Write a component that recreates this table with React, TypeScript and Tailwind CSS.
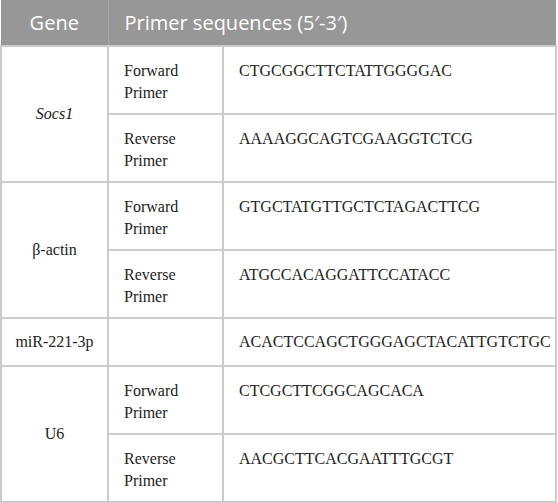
const rows = [
  { gene: 'Socs1', italic: true, primers: [
    { label: ['Forward', 'Primer'], seq: 'CTGCGGCTTCTATTGGGGAC' },
    { label: ['Reverse', 'Primer'], seq: 'AAAAGGCAGTCGAAGGTCTCG' }
  ] },
  { gene: 'β-actin', italic: false, primers: [
    { label: ['Forward', 'Primer'], seq: 'GTGCTATGTTGCTCTAGACTTCG' },
    { label: ['Reverse', 'Primer'], seq: 'ATGCCACAGGATTCCATACC' }
  ] },
  { gene: 'miR-221-3p', italic: false, primers: [
    { label: [], seq: 'ACACTCCAGCTGGGAGCTACATTGTCTGC' }
  ] },
  { gene: 'U6', italic: false, primers: [
    { label: ['Forward', 'Primer'], seq: 'CTCGCTTCGGCAGCACA' },
    { label: ['Reverse', 'Primer'], seq: 'AACGCTTCACGAATTTGCGT' }
  ] }
];

export default function App() {
  return (
    <div className="w-[558px] h-[503px] bg-white overflow-hidden">
      <table className="w-[557px] border-collapse table-fixed">
        <colgroup>
          <col className="w-[107px]" />
          <col className="w-[115px]" />
          <col />
        </colgroup>
        <thead>
          <tr className="h-[46px] bg-[#979797] text-white">
            <th className="font-[family-name:Open_Sans] text-[20px] font-normal text-center border-r border-[#a9a9a9]">Gene</th>
            <th colSpan={2} className="font-[family-name:Open_Sans] text-[20px] font-normal text-left pl-[16px]">
              Primer sequences (5′-3′)
            </th>
          </tr>
        </thead>
        <tbody>
          {rows.map((row) =>
            row.primers.map((primer, i) => (
              <tr key={row.gene + i} className={primer.label.length ? 'h-[68px]' : 'h-[48px]'}>
                {i === 0 && (
                  <td
                    rowSpan={row.primers.length}
                    className={
                      row.italic
                        ? 'font-[family-name:Liberation_Serif] italic text-[16px] text-[#222] border-2 border-[#cbcbcb] text-center align-middle'
                        : 'font-[family-name:Liberation_Serif] text-[16px] text-[#222] border-2 border-[#cbcbcb] text-center align-middle'
                    }
                  >
                    {row.gene}
                  </td>
                )}
                <td className="font-[family-name:Liberation_Serif] text-[16px] leading-[22px] text-[#222] border-2 border-[#cbcbcb] align-top pl-[15px] pr-2 pt-[13px]">
                  {primer.label.map((line) => (
                    <div key={line}>{line}</div>
                  ))}
                </td>
                <td
                  className={
                    primer.label.length
                      ? 'font-[family-name:Liberation_Serif] text-[16px] leading-[22px] text-[#222] border-2 border-[#cbcbcb] align-top pl-[15px] pr-2 pt-[13px]'
                      : 'font-[family-name:Liberation_Serif] text-[16px] leading-[22px] text-[#222] border-2 border-[#cbcbcb] align-middle pl-[15px] pr-2'
                  }
                >
                  {primer.seq}
                </td>
              </tr>
            ))
          )}
        </tbody>
      </table>
    </div>
  );
}
